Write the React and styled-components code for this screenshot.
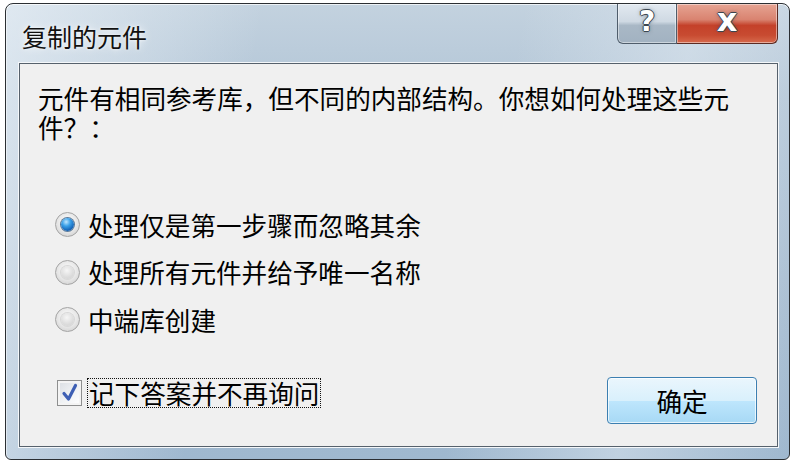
import styled, { createGlobalStyle } from "styled-components";

const GlobalStyle = createGlobalStyle`
  body {
    margin: 0;
    background: #ffffff;
    font-family: "Noto Sans CJK SC", "Noto Sans", sans-serif;
  }
`;

const options = [
  { id: "first", label: "处理仅是第一步骤而忽略其余", checked: true },
  { id: "all", label: "处理所有元件并给予唯一名称", checked: false },
  { id: "create", label: "中端库创建", checked: false },
];

const App = () => {
  return (
    <>
      <GlobalStyle />
      <Window>
        <TitleBar>
          <Title>复制的元件</Title>
          <CaptionButtons>
            <CaptionButton $kind="help">?</CaptionButton>
            <CaptionButton $kind="close">x</CaptionButton>
          </CaptionButtons>
        </TitleBar>
        <Content>
          <Message>元件有相同参考库，但不同的内部结构。你想如何处理这些元件？：</Message>
          <OptionList>
            {options.map((option) => (
              <Option key={option.id}>
                <Radio $checked={option.checked} />
                <OptionLabel>{option.label}</OptionLabel>
              </Option>
            ))}
          </OptionList>
          <BottomRow>
            <CheckRow>
              <Checkbox>
                <svg width="17" height="19" viewBox="0 0 17 19">
                  <path
                    d="M3 10.5 L7.5 16 L14.5 2.5"
                    fill="none"
                    stroke="#3d5fb4"
                    strokeWidth="3.2"
                    strokeLinecap="round"
                    strokeLinejoin="round"
                  />
                </svg>
              </Checkbox>
              <FocusLabel>记下答案并不再询问</FocusLabel>
            </CheckRow>
            <OkButton>确定</OkButton>
          </BottomRow>
        </Content>
      </Window>
    </>
  );
};

const Window = styled.div`
  box-sizing: border-box;
  margin: 3px 0 0 5px;
  width: 785px;
  height: 457px;
  border: 1px solid #2b2f33;
  border-radius: 8px 8px 6px 6px;
  padding: 0 11px 12px 13px;
  display: flex;
  flex-direction: column;
  background:
    linear-gradient(100deg, rgba(235, 242, 248, 0.7) 0%, rgba(255, 255, 255, 0) 30%, rgba(255, 255, 255, 0) 60%, rgba(225, 234, 242, 0.5) 80%, rgba(255, 255, 255, 0) 100%),
    linear-gradient(180deg, #c3d2df 0%, #b3c6d7 20%, #a9bed2 60%, #9fb8cf 100%);
  box-shadow: inset 0 1px 0 rgba(255, 255, 255, 0.7), inset 1px 0 0 rgba(255, 255, 255, 0.5);
`;

const TitleBar = styled.div`
  height: 59px;
  display: flex;
  align-items: flex-start;
`;

const Title = styled.div`
  margin: 17px 0 0 3px;
  font-size: 25px;
  line-height: 30px;
  color: #111;
  text-shadow: 0 0 8px rgba(255, 255, 255, 0.9), 0 0 3px rgba(255, 255, 255, 0.8);
`;

const CaptionButtons = styled.div`
  margin-left: auto;
  display: flex;
`;

const CaptionButton = styled.div`
  box-sizing: border-box;
  height: 40px;
  width: ${(p) => (p.$kind === "close" ? "101px" : "60px")};
  display: flex;
  align-items: center;
  justify-content: center;
  border: 1px solid ${(p) => (p.$kind === "close" ? "#5b2a22" : "#4f5d6b")};
  border-top: none;
  border-left: ${(p) => (p.$kind === "close" ? "none" : "1px solid #4f5d6b")};
  border-radius: ${(p) => (p.$kind === "close" ? "0 0 6px 0" : "0 0 0 6px")};
  background: ${(p) =>
    p.$kind === "close"
      ? "linear-gradient(180deg, #e6a493 0%, #d98370 40%, #c4412a 55%, #c84b31 80%, #d66a4d 100%)"
      : "linear-gradient(180deg, #e2e9f0 0%, #cfd9e3 45%, #a9b8c6 55%, #a2b2c1 100%)"};
  box-shadow: inset 0 0 0 1px rgba(255, 255, 255, 0.45);
  font-family: "DejaVu Sans", sans-serif;
  font-weight: bold;
  font-size: ${(p) => (p.$kind === "close" ? "32px" : "28px")};
  line-height: 1;
  padding-bottom: ${(p) => (p.$kind === "close" ? "7px" : "3px")};
  color: #ffffff;
  text-shadow:
    -1px 0 0 #3b4650, 1px 0 0 #3b4650, 0 -1px 0 #3b4650, 0 1px 0 #3b4650,
    0 0 4px rgba(40, 50, 60, 0.6);
`;

const Content = styled.div`
  flex: 1;
  display: flex;
  flex-direction: column;
  background: #f0f0f0;
  border: 1px solid #56616c;
  box-shadow: 0 0 0 1px #f4f7fa;
  padding: 19px 20px 22px 18px;
`;

const Message = styled.div`
  max-width: 700px;
  font-size: 25.6px;
  line-height: 29px;
  color: #000;
`;

const OptionList = styled.div`
  margin-top: 60px;
  padding-left: 17px;
  display: flex;
  flex-direction: column;
`;

const Option = styled.div`
  height: 47.5px;
  display: flex;
  align-items: center;
  gap: 8px;
`;

const Radio = styled.span`
  box-sizing: border-box;
  width: 25px;
  height: 25px;
  border-radius: 50%;
  border: 1px solid #a4a4a4;
  background: radial-gradient(circle at 50% 40%, #ffffff 0%, #e6e6e6 55%, #c9c9c9 100%);
  display: flex;
  align-items: center;
  justify-content: center;

  &::after {
    content: "";
    width: 13px;
    height: 13px;
    border-radius: 50%;
    background: ${(p) =>
      p.$checked
        ? "radial-gradient(circle at 40% 30%, #bfe6ff 0%, #3aa0e8 35%, #1565b8 70%, #0c3f80 100%)"
        : "radial-gradient(circle at 45% 35%, #f6f6f6 0%, #dcdcdc 60%, #cfcfcf 100%)"};
    box-shadow: ${(p) => (p.$checked ? "0 0 0 1px #5a7a9a" : "0 0 0 1px #d8d8d8")};
  }
`;

const OptionLabel = styled.span`
  font-size: 25.6px;
  line-height: 30px;
  color: #000;
`;

const BottomRow = styled.div`
  margin-top: 33px;
  display: flex;
  align-items: flex-start;
  justify-content: space-between;
`;

const CheckRow = styled.div`
  margin: 1px 0 0 19px;
  display: flex;
  align-items: center;
  gap: 5px;
`;

const Checkbox = styled.span`
  box-sizing: border-box;
  width: 25px;
  height: 26px;
  border: 1px solid #8e8f8f;
  background: linear-gradient(135deg, #d9dde2 0%, #f2f4f6 60%, #ffffff 100%);
  box-shadow: inset 0 0 0 2px #f4f4f4;
  display: flex;
  align-items: center;
  justify-content: center;
`;

const FocusLabel = styled.span`
  padding: 0 1px;
  border: 1px dotted #111;
  font-size: 25.6px;
  line-height: 28px;
  color: #000;
`;

const OkButton = styled.button`
  width: 150px;
  height: 47px;
  border: 1px solid #3c7fb1;
  border-radius: 4px;
  background: linear-gradient(180deg, #eaf6fd 0%, #d9f0fc 50%, #bee6fd 51%, #a7d9f5 100%);
  box-shadow: inset 0 0 0 1px rgba(255, 255, 255, 0.7);
  font-family: "Noto Sans CJK SC", sans-serif;
  font-size: 25.6px;
  color: #000;
  padding: 0;
`;

export default App;
